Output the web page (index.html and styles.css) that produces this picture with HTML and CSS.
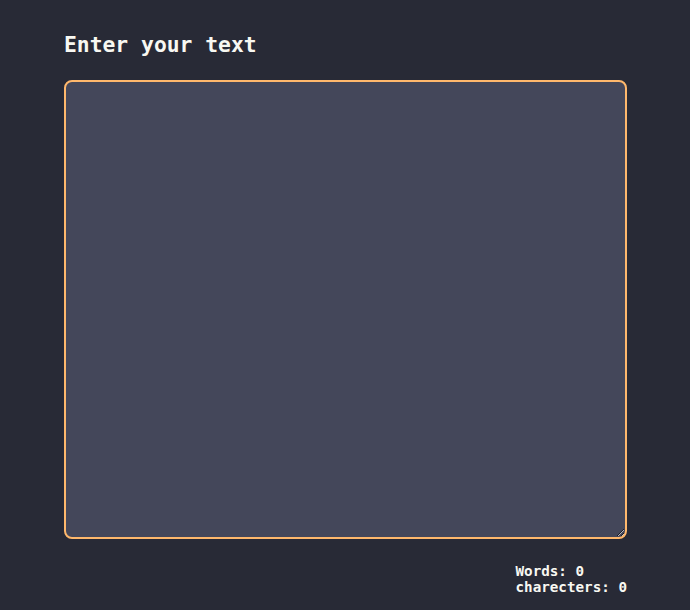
FILE: index.html
```html
<!DOCTYPE html>
<html>
<head>
<meta charset="utf-8">
<link rel="stylesheet" href="styles.css">
</head>
<body>
<main class="app">
  <h1 class="title">Enter your text</h1>
  <textarea class="editor"></textarea>
  <div class="stats">
    <div class="stats-block">
      <div>Words: 0</div>
      <div>charecters: 0</div>
    </div>
  </div>
</main>
</body>
</html>
```
FILE: styles.css
```css
html, body {
  margin: 0;
  padding: 0;
  background: #282a36;
  height: 100%;
}
body {
  font-family: "DejaVu Sans Mono", monospace;
  color: #f8f8f2;
}
.app {
  width: 563px;
  padding: 29px 0 0 64px;
  display: flex;
  flex-direction: column;
}
.title {
  margin: 0;
  font-size: 21.33px;
  font-weight: bold;
  line-height: 31px;
}
.editor {
  margin-top: 20px;
  box-sizing: border-box;
  width: 563px;
  height: 459px;
  background: #44475a;
  border: 2px solid #ffb86c;
  border-radius: 8px;
  outline: none;
  color: #f8f8f2;
  color-scheme: dark;
  font-family: "DejaVu Sans Mono", monospace;
  font-size: 14px;
}
.stats {
  display: flex;
  justify-content: flex-end;
  margin-top: 24px;
}
.stats-block {
  font-size: 14.25px;
  font-weight: bold;
  line-height: 16px;
}
```
